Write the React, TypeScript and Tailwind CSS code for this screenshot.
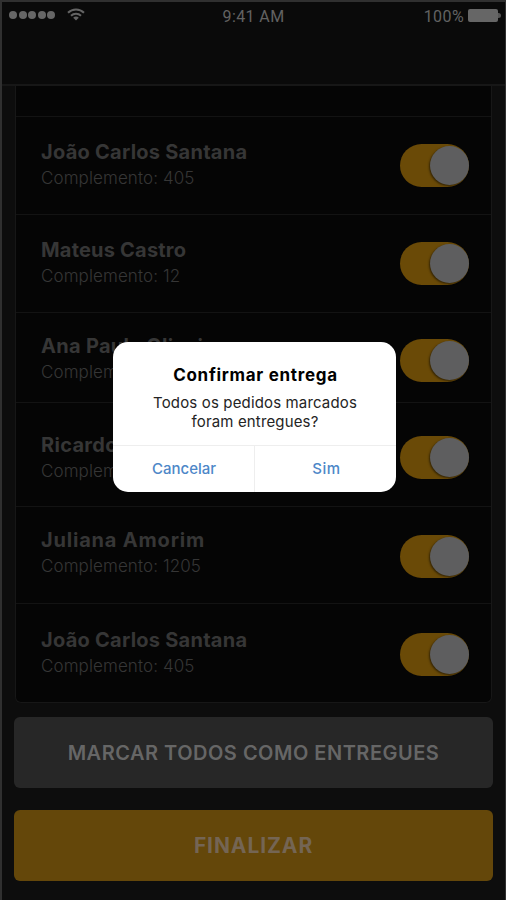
type Order = {
  name: string;
  complement: string;
  rowClass: string;
  textClass: string;
  toggleClass: string;
  nameClass: string;
};

const orders: Order[] = [
  { name: "João Carlos Santana", complement: "405", rowClass: "h-[98px]", textClass: "mt-[22px]", toggleClass: "mt-[27px]", nameClass: "tracking-[0.25px]" },
  { name: "Mateus Castro", complement: "12", rowClass: "h-[98px]", textClass: "mt-[22px]", toggleClass: "mt-[27px]", nameClass: "tracking-[0.2px]" },
  { name: "Ana Paula Oliveira", complement: "301", rowClass: "h-[90px]", textClass: "mt-[20px]", toggleClass: "mt-[26px]", nameClass: "tracking-[0.3px]" },
  { name: "Ricardo Alves", complement: "802", rowClass: "h-[104px]", textClass: "mt-[29px]", toggleClass: "mt-[33px]", nameClass: "tracking-[0.3px]" },
  { name: "Juliana Amorim", complement: "1205", rowClass: "h-[97px]", textClass: "mt-[20px]", toggleClass: "mt-[28px]", nameClass: "tracking-[0.8px]" },
  { name: "João Carlos Santana", complement: "405", rowClass: "h-[99px]", textClass: "mt-[23px]", toggleClass: "mt-[29px]", nameClass: "tracking-[0.25px]" },
];

function Toggle({ className }: { className: string }) {
  return (
    <div className={`flex h-[43px] w-[69px] shrink-0 items-center justify-end rounded-full bg-[#6a4a07] ${className}`}>
      <div className="h-[39px] w-[39px] rounded-full bg-[#5e5e5f] shadow-[-1px_1px_2px_rgba(0,0,0,0.5)]" />
    </div>
  );
}

function StatusBar() {
  return (
    <div className="flex h-[30px] items-center justify-between pr-[4px] pl-[7px] font-['Roboto',sans-serif] text-[16px] text-[#626262]">
      <div className="flex w-[161px] items-center pb-[5px]">
        <div className="flex gap-[1.6px]">
          {[0, 1, 2, 3, 4].map((i) => (
            <span key={i} className="h-[8px] w-[8px] rounded-full bg-[#666666]" />
          ))}
        </div>
        <svg className="ml-[12px]" width="18" height="13" viewBox="0 0 18 13" fill="none" stroke="#646464">
          <path d="M1 4.7C5.4.3 12.6.3 17 4.7" strokeWidth="2" />
          <path d="M4 7.7c2.8-2.7 7.2-2.7 10 0" strokeWidth="2" />
          <path d="M6.2 9.7c1.5-1.5 4.1-1.5 5.6 0L9 12.5z" fill="#646464" stroke="none" />
        </svg>
      </div>
      <span className="tracking-[0.4px]">9:41 AM</span>
      <div className="flex w-[164px] items-center justify-end">
        <span className="tracking-[0.4px]">100%</span>
        <div className="mb-[4px] ml-[4px] h-[13px] w-[30px] rounded-[2px] bg-[#666666]" />
        <div className="mb-[4px] h-[5px] w-[3px] rounded-r-full bg-[#555555]" />
      </div>
    </div>
  );
}

export default function App() {
  return (
    <div className="relative h-[900px] w-[506px] overflow-hidden border-t-2 border-r border-l-2 border-[#303030] bg-[#0d0d0d] font-['Inter',sans-serif]">
      <header className="h-[84px] border-b-2 border-[#171717] bg-[#0a0a0a]">
        <StatusBar />
      </header>

      <main className="px-[12px]">
        <section className="mr-px ml-px h-[617px] overflow-hidden rounded-b-[6px] border-x border-b border-[#171717] bg-[#050505]">
          <div className="h-[31px] border-b border-[#131313]" />
          {orders.map((order, index) => (
            <div
              key={index}
              className={`flex items-start justify-between border-b border-[#131313] pr-[22px] pl-[25px] last:border-b-0 ${order.rowClass}`}
            >
              <div className={order.textClass}>
                <h2 className={`text-[20px] leading-[27px] font-bold whitespace-nowrap text-[#363636] ${order.nameClass}`}>{order.name}</h2>
                <p className="text-[17px] leading-[24px] font-light tracking-[0.1px] whitespace-nowrap text-[#363636]">
                  Complemento: {order.complement}
                </p>
              </div>
              <Toggle className={order.toggleClass} />
            </div>
          ))}
        </section>

        <button className="mt-[14px] block h-[71px] w-[479px] rounded-[6px] bg-[#272727] text-[20px] font-semibold tracking-[0.5px] whitespace-nowrap text-[#666666]">
          MARCAR TODOS COMO ENTREGUES
        </button>
        <button className="mt-[22px] block h-[71px] w-[479px] rounded-[6px] bg-[#64470a] text-[21px] font-bold tracking-[0.9px] text-[#746554]">
          FINALIZAR
        </button>
      </main>

      <div className="absolute top-[340px] left-[111px] flex h-[150px] w-[283px] flex-col overflow-hidden rounded-[15px] bg-white text-center">
        <div className="h-[104px] border-b border-[#eeeeee] pt-[21px]">
          <h1 className="pl-[2px] text-[17px] leading-[24px] font-bold tracking-[0.7px] text-black">Confirmar entrega</h1>
          <p className="mt-[6px] pl-px text-[15px] leading-[19px] tracking-[0.15px] text-[#242424]">
            Todos os pedidos marcados
            <br />
            foram entregues?
          </p>
        </div>
        <div className="flex flex-1 text-[15px] font-medium text-[#4d87c8]">
          <button className="w-[142px] border-r border-[#eeeeee] pl-px">Cancelar</button>
          <button className="flex-1 pl-[2px] tracking-[0.5px]">Sim</button>
        </div>
      </div>
    </div>
  );
}
